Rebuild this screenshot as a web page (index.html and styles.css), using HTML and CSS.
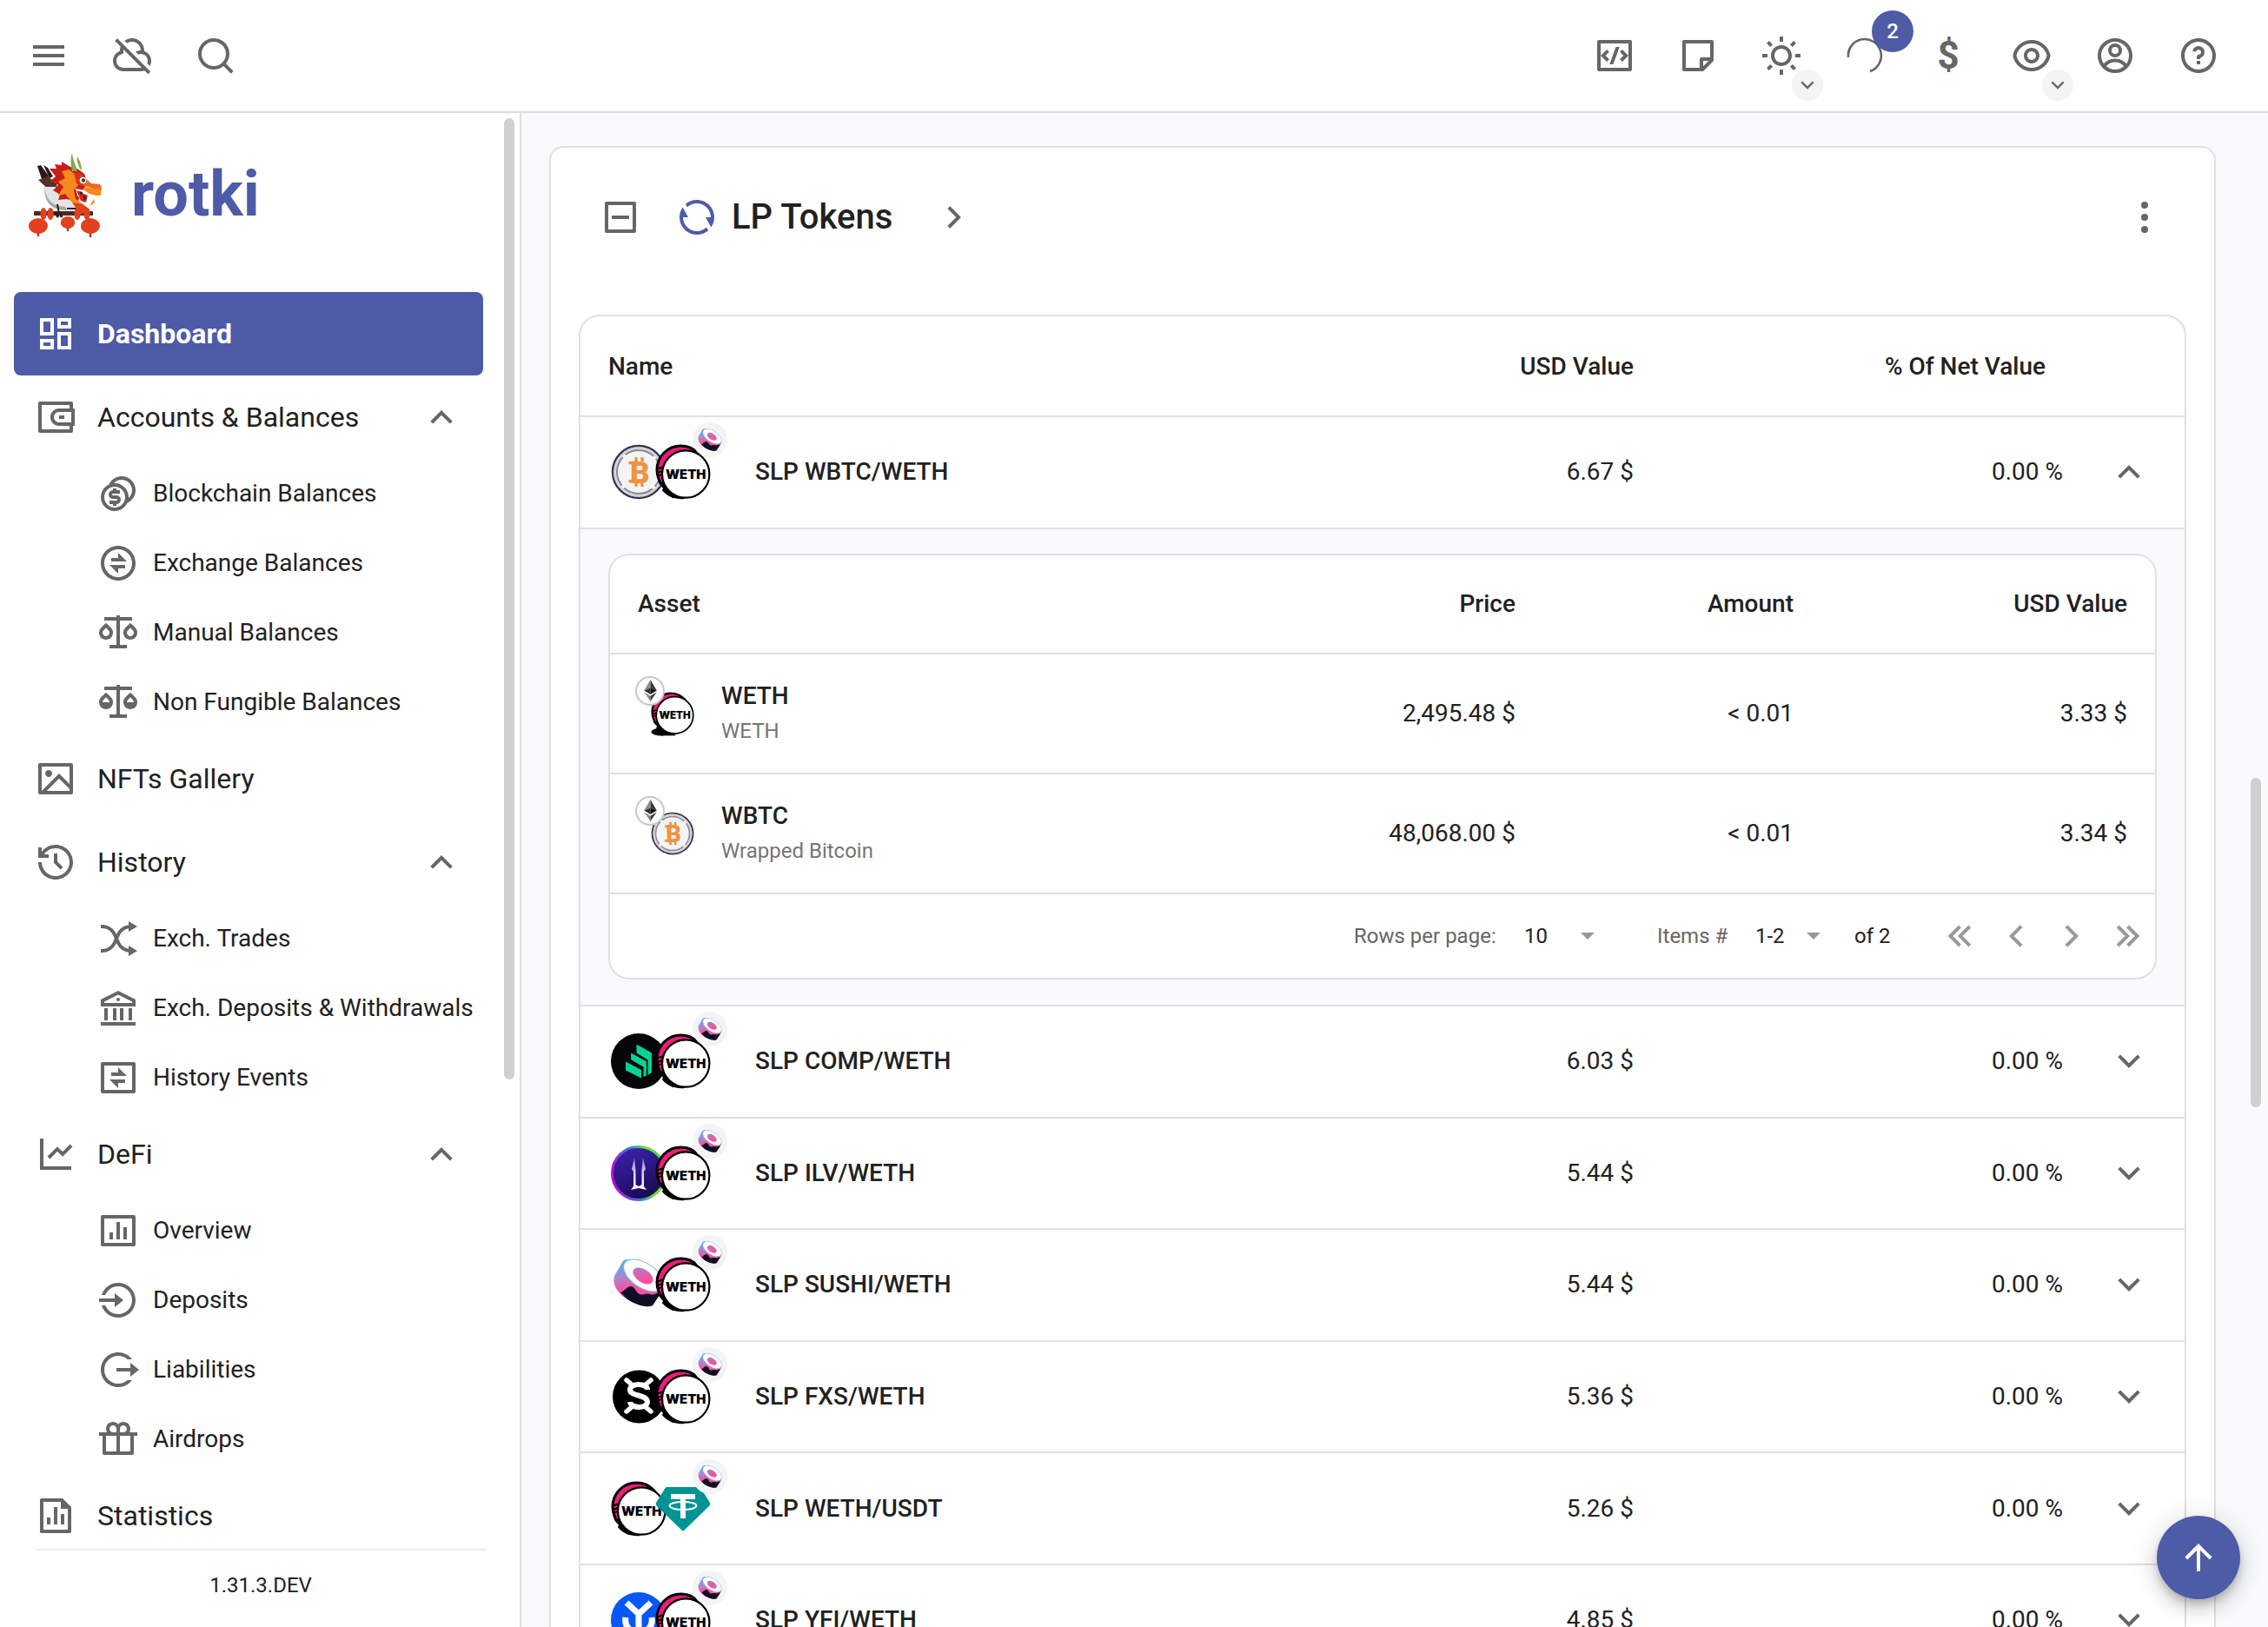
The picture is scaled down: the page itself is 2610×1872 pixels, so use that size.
FILE: index.html
```html
<!DOCTYPE html>
<html lang="en">
<head>
<meta charset="utf-8">
<title>rotki</title>
<link rel="stylesheet" href="styles.css">
</head>
<body>
<svg class="sprite" width="0" height="0" aria-hidden="true">
  <defs>
    <linearGradient id="sushi-side" x1="0.2" y1="0" x2="0.4" y2="1"><stop offset="0" stop-color="#41b0f0"/><stop offset="0.35" stop-color="#a68bd0"/><stop offset="0.6" stop-color="#f552a0"/><stop offset="1" stop-color="#fa52a0"/></linearGradient>
    <linearGradient id="sushi-core" x1="0" y1="0" x2="1" y2="0.6"><stop offset="0" stop-color="#a383cc"/><stop offset="0.8" stop-color="#f552a0"/></linearGradient>
    <linearGradient id="ilv-ring" x1="0" y1="0.6" x2="1" y2="0.4"><stop offset="0" stop-color="#c800d8"/><stop offset="0.45" stop-color="#2c7fe0"/><stop offset="0.7" stop-color="#7be02c"/><stop offset="1" stop-color="#3fd63f"/></linearGradient>
    <linearGradient id="ilv-core" x1="0.2" y1="0" x2="0.6" y2="1"><stop offset="0" stop-color="#3a22a8"/><stop offset="0.55" stop-color="#2b1480"/><stop offset="1" stop-color="#190a4a"/></linearGradient>
    <linearGradient id="ilv-blade" x1="0" y1="0" x2="0" y2="1"><stop offset="0" stop-color="#8a82c8"/><stop offset="0.6" stop-color="#e4e2f0"/><stop offset="1" stop-color="#ffffff"/></linearGradient>
  </defs>
  <symbol id="chev-up" viewBox="0 0 24 24"><path d="M12 10.83L7.05 15.78L5.64 14.36L12 8L18.36 14.36L16.95 15.78L12 10.83Z"/></symbol>
  <symbol id="chev-down" viewBox="0 0 24 24"><path d="M12 13.17L16.95 8.22L18.36 9.64L12 16L5.64 9.64L7.05 8.22L12 13.17Z"/></symbol>
  <symbol id="chev-left" viewBox="0 0 24 24"><path d="M10.83 12L15.78 16.95L14.36 18.36L8 12L14.36 5.64L15.78 7.05L10.83 12Z"/></symbol>
  <symbol id="chev-right" viewBox="0 0 24 24"><path d="M13.17 12L8.22 7.05L9.64 5.64L16 12L9.64 18.36L8.22 16.95L13.17 12Z"/></symbol>
  <symbol id="chev-first" viewBox="0 0 24 24"><path d="M4.84 12L11.04 18.21L12.46 16.79L7.66 12L12.46 7.21L11.04 5.79L4.84 12ZM10.49 12L16.69 18.21L18.11 16.79L13.31 12L18.11 7.21L16.69 5.79L10.49 12Z"/></symbol>
  <symbol id="chev-last" viewBox="0 0 24 24"><path d="M19.16 12L12.96 5.79L11.54 7.21L16.34 12L11.54 16.79L12.96 18.21L19.16 12ZM13.51 12L7.31 5.79L5.89 7.21L10.69 12L5.89 16.79L7.31 18.21L13.51 12Z"/></symbol>
  <symbol id="bars" viewBox="0 0 24 24"><path fill-rule="evenodd" d="M3 3H21C21.55 3 22 3.45 22 4V20C22 20.55 21.55 21 21 21H3C2.45 21 2 20.55 2 20V4C2 3.45 2.45 3 3 3ZM4 5V19H20V5H4ZM7 13H9V17H7V13ZM11 7H13V17H11V7ZM15 10H17V17H15V10Z"/></symbol>

  <symbol id="weth" viewBox="0 0 64 64">
    <circle cx="29.500" cy="29.500" r="27.500" fill="#ec1c78" stroke="#000" stroke-width="3"/>
    <path d="M2 36L8 34L9 46L18 58L33 62L20 62L8 53L9 51L4 45Z" fill="#000"/>
    <path d="M3 28.500L8 26.500M3 33L8 31" stroke="#000" stroke-width="2.200"/>
    <path d="M4.500 37L6.800 36L8.500 43L7 43.500Z" fill="#ec1c78"/>
    <path d="M8 53C14 61 24 64 34 63L20 52L11 52Z" fill="#000"/>
    <circle cx="35.200" cy="34.500" r="27.200" fill="#fff" stroke="#000" stroke-width="2.200"/>
  </symbol>
  <symbol id="wbtc" viewBox="0 0 64 64">
    <circle cx="32" cy="32" r="30" fill="#f4f4f4" stroke="#3a3450" stroke-width="2.400"/>
    <circle cx="32" cy="32" r="27.500" fill="none" stroke="#d3d2d8" stroke-width="2.400"/>
    <circle cx="32" cy="32" r="25" fill="none" stroke="#8a8694" stroke-width="2" stroke-dasharray="35.300 4" stroke-dashoffset="-22"/>
    <path d="M29 15V20M36 15V20M29 44V49M36 44V49" stroke="#f09242" stroke-width="3.400"/>
    <path d="M20.500 21.500H27M20.500 42.800H27" stroke="#f09242" stroke-width="3.400"/>
  </symbol>
  <symbol id="sushi" viewBox="0 0 64 64">
    <path d="M14 5L4 22C1 30 7 42 19 49C30 56 42 59 48 56L60 38C62 30 53 17 39 9C28 3 17 1 14 5Z" fill="url(#sushi-side)"/>
    <path d="M11 41C16 40 18 34 23 34C28 34 28 41 33 43C37 45 40 41 45 43C49 45 53 41 58 41L48 56C42 59 30 56 19 49Z" fill="#0e0f23"/>
    <ellipse cx="37.500" cy="21.500" rx="26" ry="14" transform="rotate(34 37.500 21.500)" fill="#fff" stroke="#7cb8ea" stroke-width="1"/>
    <ellipse cx="37" cy="22" rx="13" ry="7.500" transform="rotate(34 37 22)" fill="url(#sushi-core)"/>
  </symbol>
  <symbol id="comp" viewBox="0 0 64 64">
    <circle cx="32" cy="32" r="32" fill="#050607"/>
    <g fill="#00d395"><path d="M29.500 12.500L47 22.500V45L42.500 48V30.500L29.500 22.500Z"/><path d="M22.500 21.500L41.500 32V49L37 51V39L22.500 30.500Z" stroke="#050607" stroke-width="1.200"/><path d="M17 32.500L35 42V51.500L17 42.500Z"/></g>
  </symbol>
  <symbol id="ilv" viewBox="0 0 64 64">
    <circle cx="32" cy="32" r="30.500" fill="url(#ilv-core)" stroke="url(#ilv-ring)" stroke-width="3"/>
    <path d="M27 14L24 27L26 30V47L23 51L32 49L41 51L38 47V30L40 27L37 14L35.500 28V45L32 47L28.500 45V28Z" fill="url(#ilv-blade)"/>
  </symbol>
  <symbol id="fxs" viewBox="0 0 64 64">
    <circle cx="32.500" cy="32" r="30.500" fill="#000"/>
    <path d="M18 13L24 18M46 13L40 18M18 49L24 44M46 49L40 44" stroke="#fff" stroke-width="5.500" stroke-linecap="round"/>
    <path d="M42 24C42 16 22 16 22 24C22 32 42 29 42 38C42 46 23 46 22 38" fill="none" stroke="#fff" stroke-width="6"/>
  </symbol>
  <symbol id="usdt" viewBox="0 0 64 64">
    <path d="M13 7H50Q52 7 53 9L63 25Q64 27 62 29L33 57Q32 58 31 57L2 29Q0 27 1 25L11 9Q12 7 13 7Z" fill="#009393"/>
    <path d="M18 18H46M32 18V43" stroke="#fff" stroke-width="6"/>
    <ellipse cx="32" cy="28.500" rx="15.500" ry="4.500" fill="none" stroke="#fff" stroke-width="2"/>
  </symbol>
  <symbol id="yfi" viewBox="0 0 64 64">
    <circle cx="32" cy="32" r="32" fill="#0657f9"/>
    <path d="M18 12L32 25L46 12M32 25V44M17 29C13 52 51 52 47 29" fill="none" stroke="#fff" stroke-width="7"/>
  </symbol>
  <symbol id="eth" viewBox="0 0 24 36">
    <path d="M12 0L1.500 18L12 13.500Z" fill="#8c8c8c"/><path d="M12 0L22.500 18L12 13.500Z" fill="#393939"/>
    <path d="M12 13.500L1.500 18L12 24.500Z" fill="#343434"/><path d="M12 13.500L22.500 18L12 24.500Z" fill="#141414"/>
    <path d="M1.500 20.500L12 27V36Z" fill="#8c8c8c"/><path d="M22.500 20.500L12 27V36Z" fill="#3c3c3b"/>
  </symbol>
</svg>

<header class="topbar">
  <div class="topbar-group">
    <button class="tool"><svg class="icon" viewBox="0 0 24 24"><path d="M3 6H21V8H3V6ZM3 11H21V13H3V11ZM3 16H21V18H3V16Z"/></svg></button>
    <button class="tool"><svg class="icon" viewBox="0 0 24 24"><path d="M3.51472 2.10051L22.6066 21.1924L21.1924 22.6066L19.1782 20.5924C18.503 20.8556 17.7684 21 17 21H7C3.68629 21 1 18.3137 1 15C1 12.3846 2.67346 10.1599 5.00804 9.33857C5.0027 9.22639 5 9.11351 5 9C5 8.22228 5.12683 7.47418 5.36094 6.77527L2.10051 3.51472L3.51472 2.10051ZM7 9C7 9.08147 7.00193 9.16263 7.00578 9.24344L7.07662 10.7309L5.67183 11.2252C4.0844 11.7837 3 13.2889 3 15C3 17.2091 4.79086 19 7 19H17C17.1858 19 17.3687 18.9873 17.5478 18.9628L7.03043 8.44519C7.01032 8.62736 7 8.81247 7 9ZM12 2C15.866 2 19 5.13401 19 9C19 9.11351 18.9973 9.22639 18.992 9.33857C21.3265 10.1599 23 12.3846 23 15C23 16.0883 22.7103 17.1089 22.2037 17.9889L20.7111 16.4955C20.8974 16.0335 21 15.5287 21 15C21 12.79 19.21 11 17 11C16.4711 11 15.9661 11.1027 15.5039 11.2892L14.0111 9.7964C14.8912 9.28978 15.9118 9 17 9C17 6.23858 14.7614 4 12 4C10.9295 4 9.93766 4.33646 9.12428 4.90918L7.69418 3.48007C8.88169 2.55469 10.3763 2 12 2Z"/></svg></button>
    <button class="tool"><svg class="icon" viewBox="0 0 24 24"><path d="M18.031 16.6168L22.3137 20.8995L20.8995 22.3137L16.6168 18.031C15.0769 19.263 13.124 20 11 20C6.032 20 2 15.968 2 11C2 6.032 6.032 2 11 2C15.968 2 20 6.032 20 11C20 13.124 19.263 15.0769 18.031 16.6168ZM16.0247 15.8748C17.2475 14.6146 18 12.8956 18 11C18 7.1325 14.8675 4 11 4C7.1325 4 4 7.1325 4 11C4 14.8675 7.1325 18 11 18C12.8956 18 14.6146 17.2475 15.8748 16.0247L16.0247 15.8748Z"/></svg></button>
  </div>
  <div class="topbar-group">
    <button class="tool"><svg class="icon" viewBox="0 0 24 24"><path d="M3 3H21C21.55 3 22 3.45 22 4V20C22 20.55 21.55 21 21 21H3C2.45 21 2 20.55 2 20V4C2 3.45 2.45 3 3 3ZM4 5V19H20V5H4ZM20 12L16.4645 15.5355L15.0503 14.1213L17.1716 12L15.0503 9.87868L16.4645 8.46447L20 12ZM6.82843 12L8.94975 14.1213L7.53553 15.5355L4 12L7.53553 8.46447L8.94975 9.87868L6.82843 12ZM11.2443 17H9.11597L12.7557 7H14.884L11.2443 17Z" fill-rule="evenodd"/></svg></button>
    <button class="tool"><svg class="icon" viewBox="0 0 24 24"><path d="M21 15L15 20.996L4.00221 21C3.4487 21 3 20.5551 3 20.0066V3.9934C3 3.44476 3.44495 3 3.9934 3H20.0066C20.5552 3 21 3.45576 21 4.00247V15ZM19 5H5V19H13V14C13 13.4872 13.386 13.0645 13.8834 13.0067L14 13L19 12.999V5ZM18.171 14.999L15 15V18.169L18.171 14.999Z"/></svg></button>
    <button class="tool"><svg class="icon" viewBox="0 0 24 24"><path d="M12 18C8.68629 18 6 15.3137 6 12C6 8.68629 8.68629 6 12 6C15.3137 6 18 8.68629 18 12C18 15.3137 15.3137 18 12 18ZM12 16C14.2091 16 16 14.2091 16 12C16 9.79086 14.2091 8 12 8C9.79086 8 8 9.79086 8 12C8 14.2091 9.79086 16 12 16ZM11 1H13V4H11V1ZM11 20H13V23H11V20ZM3.51472 4.92893L4.92893 3.51472L7.05025 5.63604L5.63604 7.05025L3.51472 4.92893ZM16.9497 18.364L18.364 16.9497L20.4853 19.0711L19.0711 20.4853L16.9497 18.364ZM19.0711 3.51472L20.4853 4.92893L18.364 7.05025L16.9497 5.63604L19.0711 3.51472ZM5.63604 16.9497L7.05025 18.364L4.92893 20.4853L3.51472 19.0711L5.63604 16.9497ZM23 11V13H20V11H23ZM4 11V13H1V11H4Z"/></svg><span class="tool-more"><svg viewBox="0 0 24 24"><use href="#chev-down"/></svg></span></button>
    <button class="tool"><svg class="icon" viewBox="0 0 48 48"><path class="spinner" d="M5 26A19 19 0 1 1 30 42"/></svg><span class="badge">2</span></button>
    <button class="tool currency">$</button>
    <button class="tool"><svg class="icon" viewBox="0 0 24 24"><path d="M12.0003 3C17.3924 3 21.8784 6.87976 22.8189 12C21.8784 17.1202 17.3924 21 12.0003 21C6.60812 21 2.12215 17.1202 1.18164 12C2.12215 6.87976 6.60812 3 12.0003 3ZM12.0003 19C16.2359 19 19.8603 16.052 20.7777 12C19.8603 7.94803 16.2359 5 12.0003 5C7.7646 5 4.14022 7.94803 3.22278 12C4.14022 16.052 7.7646 19 12.0003 19ZM12.0003 16.5C9.51498 16.5 7.50026 14.4853 7.50026 12C7.50026 9.51472 9.51498 7.5 12.0003 7.5C14.4855 7.5 16.5003 9.51472 16.5003 12C16.5003 14.4853 14.4855 16.5 12.0003 16.5ZM12.0003 14.5C13.381 14.5 14.5003 13.3807 14.5003 12C14.5003 10.6193 13.381 9.5 12.0003 9.5C10.6196 9.5 9.50026 10.6193 9.50026 12C9.50026 13.3807 10.6196 14.5 12.0003 14.5Z"/></svg><span class="tool-more"><svg viewBox="0 0 24 24"><use href="#chev-down"/></svg></span></button>
    <button class="tool"><svg class="icon stroked" viewBox="0 0 24 24"><circle cx="12" cy="12" r="9"/><circle cx="12" cy="9" r="3"/><path d="M5.700 18C7.200 15.900 9.500 14.700 12 14.700C14.500 14.700 16.800 15.900 18.300 18"/></svg></button>
    <button class="tool"><svg class="icon" viewBox="0 0 24 24"><path d="M12 22C6.47715 22 2 17.5228 2 12C2 6.47715 6.47715 2 12 2C17.5228 2 22 6.47715 22 12C22 17.5228 17.5228 22 12 22ZM12 20C16.4183 20 20 16.4183 20 12C20 7.58172 16.4183 4 12 4C7.58172 4 4 7.58172 4 12C4 16.4183 7.58172 20 12 20ZM11 15H13V17H11V15ZM13 13.3551V14H11V12.5C11 11.9477 11.4477 11.5 12 11.5C12.8284 11.5 13.5 10.8284 13.5 10C13.5 9.17157 12.8284 8.5 12 8.5C11.2723 8.5 10.6656 9.01823 10.5288 9.70577L8.56731 9.31346C8.88637 7.70919 10.302 6.5 12 6.5C13.933 6.5 15.5 8.067 15.5 10C15.5 11.5855 14.4457 12.9248 13 13.3551Z"/></svg></button>
  </div>
</header>

<div class="shell">
  <aside class="sidebar">
    <div class="brand">
      <svg class="brand-logo" viewBox="0 0 86 98">
        <path d="M10 16L14 15L22 26L27 38L16 34Z M17 15L22 18L28 28L24 30Z" fill="#2c181c"/>
        <path d="M11 32L22 28L32 36L34 48L24 44Z" fill="#51332c"/>
        <path d="M18 40C18 58 26 66 44 66L62 62L58 40Z" fill="#e4e4e6"/>
        <path d="M18 40C20 56 28 62 42 63L44 67C26 67 18 58 18 40Z" fill="#a5a5a8"/>
        <path d="M24 19L32 19L30 14L38 15L38 11L48 17L56 19L64 25L68 36L62 44L56 58L44 54L34 55L36 49L28 44L34 38L25 33L31 28Z" fill="#c81e18"/>
        <path d="M38 22L46 20L54 26L57 38L52 44L54 54L68 64L76 58L74 52L60 46L66 40L74 42L84 38L83 50L78 50L70 48L72 60L66 66L50 58L42 48L34 50L40 40L34 34L42 30Z" fill="#f68a1c"/>
        <path d="M52 24L60 24L67 32L62 40L55 36Z" fill="#d8321c"/>
        <path d="M50 22C48 14 48 6 50 1C51 10 54 14 56 22ZM59 19C56 13 55 9 56 5C59 10 61 15 61 21Z" fill="#86a84a"/>
        <path d="M54 42L64 44L76 52L70 62L64 60L56 50Z" fill="#fff"/><path d="M55 44L68 50L66 58L60 56Z" fill="#c92716"/>
        <path d="M58 45L62 46L61 50ZM63 50L66 52L64 56Z" fill="#2c181c"/>
        <path d="M65 30L72 36L82 37L84 43L74 42L62 38Z" fill="#ea6a1e"/>
        <circle cx="62.500" cy="32.500" r="3.800" fill="#fff"/><circle cx="63" cy="32.500" r="2.200" fill="#155044"/>
        <path d="M33 60L35 71M44 65H57" stroke="#2c181c" stroke-width="2" fill="none"/>
        <rect x="6" y="68" width="68" height="5" rx="1" fill="#4a2a20"/>
        <g fill="#e2401f"><ellipse cx="17" cy="71" rx="3.600" ry="7"/><ellipse cx="25" cy="71" rx="3.600" ry="7"/><ellipse cx="56" cy="71" rx="3.600" ry="7"/><ellipse cx="67" cy="71" rx="3.600" ry="7"/><path d="M50 58L62 60L70 66L60 72Z"/><ellipse cx="11" cy="85" rx="11" ry="9"/><ellipse cx="45" cy="81" rx="8.200" ry="7"/><ellipse cx="71" cy="85" rx="11" ry="9"/></g>
        <path d="M11 93V97M45 87V91M71 93V98" stroke="#b03a26" stroke-width="2.500"/>
        <path d="M31 69L34 75M36 69L38 75" stroke="#2c181c" stroke-width="3"/>
      </svg>
      <span class="brand-name">rotki</span>
    </div>
    <nav class="menu">
      <a class="item active"><svg class="icon" viewBox="0 0 24 24"><path d="M13 21V11H21V21H13ZM3 13V3H11V13H3ZM9 11V5H5V11H9ZM3 21V15H11V21H3ZM5 19H9V17H5V19ZM15 19H19V13H15V19ZM13 3H21V9H13V3ZM15 5V7H19V5H15Z"/></svg><span>Dashboard</span></a>
      <a class="item"><svg class="icon" viewBox="0 0 24 24"><path fill-rule="evenodd" d="M22 7H23V17H22V20C22 20.55 21.55 21 21 21H3C2.45 21 2 20.55 2 20V4C2 3.45 2.45 3 3 3H21C21.55 3 22 3.45 22 4V7ZM20 17H14C11.24 17 9 14.76 9 12C9 9.24 11.24 7 14 7H20V5H4V19H20V17ZM21 15V9H14C12.34 9 11 10.34 11 12C11 13.66 12.34 15 14 15H21ZM14 11H17V13H14V11Z"/></svg><span>Accounts &amp; Balances</span><svg class="icon toggle"><use href="#chev-up"/></svg></a>
      <a class="subitem"><svg class="icon" viewBox="0 0 24 24"><path d="M14.0049 2.00281C18.4232 2.00281 22.0049 5.58453 22.0049 10.0028C22.0049 13.2474 20.0733 16.0408 17.2973 17.296C16.0422 20.0712 13.249 22.0028 10.0049 22.0028C5.5866 22.0028 2.00488 18.4211 2.00488 14.0028C2.00488 10.7586 3.93646 7.96544 6.71157 6.71045C7.96689 3.93445 10.7603 2.00281 14.0049 2.00281ZM10.0049 8.00281C6.69117 8.00281 4.00488 10.6891 4.00488 14.0028C4.00488 17.3165 6.69117 20.0028 10.0049 20.0028C13.3186 20.0028 16.0049 17.3165 16.0049 14.0028C16.0049 10.6891 13.3186 8.00281 10.0049 8.00281ZM11.0049 9.00281V10.0028H13.0049V12.0028H9.00488C8.72874 12.0028 8.50488 12.2267 8.50488 12.5028C8.50488 12.7482 8.68176 12.9524 8.91501 12.9948L9.00488 13.0028H11.0049C12.3856 13.0028 13.5049 14.1221 13.5049 15.5028C13.5049 16.8835 12.3856 18.0028 11.0049 18.0028V19.0028H9.00488V18.0028H7.00488V16.0028H11.0049C11.281 16.0028 11.5049 15.7789 11.5049 15.5028C11.5049 15.2574 11.328 15.0532 11.0948 15.0109L11.0049 15.0028H9.00488C7.62417 15.0028 6.50488 13.8835 6.50488 12.5028C6.50488 11.1221 7.62417 10.0028 9.00488 10.0028V9.00281H11.0049ZM14.0049 4.00281C12.2214 4.00281 10.6196 4.78097 9.52064 6.0163C9.68133 6.00733 9.84254 6.00281 10.0049 6.00281C14.4232 6.00281 18.0049 9.58453 18.0049 14.0028C18.0049 14.1655 18 14.327 17.9905 14.4873C19.2265 13.3885 20.0049 11.7865 20.0049 10.0028C20.0049 6.6891 17.3186 4.00281 14.0049 4.00281Z"/></svg><span>Blockchain Balances</span></a>
      <a class="subitem"><svg class="icon" viewBox="0 0 24 24"><path d="M12 22C6.47715 22 2 17.5228 2 12C2 6.47715 6.47715 2 12 2C17.5228 2 22 6.47715 22 12C22 17.5228 17.5228 22 12 22ZM12 20C16.4183 20 20 16.4183 20 12C20 7.58172 16.4183 4 12 4C7.58172 4 4 7.58172 4 12C4 16.4183 7.58172 20 12 20ZM12 9V6L17 11H8V9H12ZM12 15V18L7 13H16V15H12Z"/></svg><span>Exchange Balances</span></a>
      <a class="subitem"><svg class="icon" viewBox="0 0 24 24"><path d="M13 2V3H20V5H13V19H17V21H7V19H11V5H4V3H11V2H13ZM5 6.34L7.83 9.17C8.55 9.9 9 10.9 9 12C9 14.21 7.21 16 5 16C2.79 16 1 14.21 1 12C1 10.9 1.450 9.9 2.170 9.17L5 6.34ZM19 6.34L21.83 9.17C22.55 9.9 23 10.9 23 12C23 14.21 21.21 16 19 16C16.79 16 15 14.21 15 12C15 10.9 15.450 9.9 16.170 9.17L19 6.34ZM5 9.17L3.580 10.590C3.210 10.960 3 11.460 3 12C3 13.1 3.9 14 5 14C6.1 14 7 13.1 7 12C7 11.460 6.790 10.960 6.410 10.590L5 9.17ZM19 9.17L17.580 10.590C17.210 10.960 17 11.460 17 12C17 13.1 17.9 14 19 14C20.1 14 21 13.1 21 12C21 11.460 20.790 10.960 20.410 10.590L19 9.17Z"/></svg><span>Manual Balances</span></a>
      <a class="subitem"><svg class="icon" viewBox="0 0 24 24"><path d="M13 2V3H20V5H13V19H17V21H7V19H11V5H4V3H11V2H13ZM5 6.34L7.83 9.17C8.55 9.9 9 10.9 9 12C9 14.21 7.21 16 5 16C2.79 16 1 14.21 1 12C1 10.9 1.450 9.9 2.170 9.17L5 6.34ZM19 6.34L21.83 9.17C22.55 9.9 23 10.9 23 12C23 14.21 21.21 16 19 16C16.79 16 15 14.21 15 12C15 10.9 15.450 9.9 16.170 9.17L19 6.34ZM5 9.17L3.580 10.590C3.210 10.960 3 11.460 3 12H7C7 11.460 6.790 10.960 6.410 10.590L5 9.17ZM19 9.17L17.580 10.590C17.210 10.960 17 11.460 17 12H21C21 11.460 20.790 10.960 20.410 10.590L19 9.17Z"/></svg><span>Non Fungible Balances</span></a>
      <a class="item"><svg class="icon" viewBox="0 0 24 24"><path d="M2.9918 21C2.44405 21 2 20.5551 2 20.0066V3.9934C2 3.44476 2.45531 3 2.9918 3H21.0082C21.556 3 22 3.44495 22 3.9934V20.0066C22 20.5552 21.5447 21 21.0082 21H2.9918ZM20 15V5H4V19L14 9L20 15ZM20 17.8284L14 11.8284L6.82843 19H20V17.8284ZM8 11C6.89543 11 6 10.1046 6 9C6 7.89543 6.89543 7 8 7C9.10457 7 10 7.89543 10 9C10 10.1046 9.10457 11 8 11Z"/></svg><span>NFTs Gallery</span></a>
      <a class="item"><svg class="icon" viewBox="0 0 24 24"><path d="M12 2C17.5228 2 22 6.47715 22 12C22 17.5228 17.5228 22 12 22C6.47715 22 2 17.5228 2 12H4C4 16.4183 7.58172 20 12 20C16.4183 20 20 16.4183 20 12C20 7.58172 16.4183 4 12 4C9.25022 4 6.82447 5.38734 5.38451 7.50024L8 7.5V9.5H2V3.5H4L3.99989 5.99918C5.82434 3.57075 8.72873 2 12 2ZM13 7L12.9998 11.585L16.2426 14.8284L14.8284 16.2426L10.9998 12.413L11 7H13Z"/></svg><span>History</span><svg class="icon toggle"><use href="#chev-up"/></svg></a>
      <a class="subitem"><svg class="icon" viewBox="0 0 24 24"><path d="M18 17.8832V16L23 19L18 22V19.9095C14.9224 19.4698 12.2513 17.4584 11.0029 14.5453L11 14.5386L10.9971 14.5453C9.57893 17.8544 6.32508 20 2.72483 20H2V18H2.72483C5.52503 18 8.05579 16.3312 9.15885 13.7574L9.91203 12L9.15885 10.2426C8.05579 7.66878 5.52503 6 2.72483 6H2V4H2.72483C6.32508 4 9.57893 6.14557 10.9971 9.45473L11 9.46141L11.0029 9.45473C12.2513 6.5416 14.9224 4.53022 18 4.09051V2L23 5L18 8V6.11684C15.7266 6.53763 13.7737 8.0667 12.8412 10.2426L12.088 12L12.8412 13.7574C13.7737 15.9333 15.7266 17.4624 18 17.8832Z"/></svg><span>Exch. Trades</span></a>
      <a class="subitem"><svg class="icon" viewBox="0 0 24 24"><path d="M2 20H22V22H2V20ZM4 12H6V19H4V12ZM9 12H11V19H9V12ZM13 12H15V19H13V12ZM18 12H20V19H18V12ZM2 7L12 2L22 7V11H2V7ZM4 8.23607V9H20V8.23607L12 4.23607L4 8.23607ZM12 8C11.4477 8 11 7.55228 11 7C11 6.44772 11.4477 6 12 6C12.5523 6 13 6.44772 13 7C13 7.55228 12.5523 8 12 8Z"/></svg><span>Exch. Deposits &amp; Withdrawals</span></a>
      <a class="subitem"><svg class="icon" viewBox="0 0 24 24"><path fill-rule="evenodd" d="M3 3H21C21.55 3 22 3.45 22 4V20C22 20.55 21.55 21 21 21H3C2.45 21 2 20.55 2 20V4C2 3.45 2.45 3 3 3ZM4 5V19H20V5H4ZM12 9V6L17 11H8V9H12ZM12 15V18L7 13H16V15H12Z"/></svg><span>History Events</span></a>
      <a class="item"><svg class="icon" viewBox="0 0 24 24"><path d="M5 3V19H21V21H3V3H5ZM20.2929 6.29289L21.7071 7.70711L16 13.4142L13 10.415L8.70711 14.7071L7.29289 13.2929L13 7.58579L16 10.585L20.2929 6.29289Z"/></svg><span>DeFi</span><svg class="icon toggle"><use href="#chev-up"/></svg></a>
      <a class="subitem"><svg class="icon"><use href="#bars"/></svg><span>Overview</span></a>
      <a class="subitem"><svg class="icon" viewBox="0 0 24 24"><path d="M10 11V8L15 12L10 16V13H1V11H10ZM2.4578 15H4.58152C5.76829 17.9318 8.64262 20 12 20C16.4183 20 20 16.4183 20 12C20 7.58172 16.4183 4 12 4C8.64262 4 5.76829 6.06817 4.58152 9H2.4578C3.73207 4.94289 7.52236 2 12 2C17.5228 2 22 6.47715 22 12C22 17.5228 17.5228 22 12 22C7.52236 22 3.73207 19.0571 2.4578 15Z"/></svg><span>Deposits</span></a>
      <a class="subitem"><svg class="icon" viewBox="0 0 24 24"><path d="M12 22C6.47715 22 2 17.5228 2 12C2 6.47715 6.47715 2 12 2C15.2713 2 18.1757 3.57078 20.0002 5.99923L17.2909 5.99931C15.8807 4.75499 14.0285 4 12 4C7.58172 4 4 7.58172 4 12C4 16.4183 7.58172 20 12 20C14.029 20 15.8816 19.2446 17.2919 17.9998L20.0009 17.9998C18.1765 20.4288 15.2717 22 12 22ZM19 16V13H11V11H19V8L24 12L19 16Z"/></svg><span>Liabilities</span></a>
      <a class="subitem"><svg class="icon" viewBox="0 0 24 24"><path d="M15.0049 2.00281C17.214 2.00281 19.0049 3.79367 19.0049 6.00281C19.0049 6.73184 18.8098 7.41532 18.4691 8.00392L23.0049 8.00281V10.0028H21.0049V20.0028C21.0049 20.5551 20.5572 21.0028 20.0049 21.0028H4.00488C3.4526 21.0028 3.00488 20.5551 3.00488 20.0028V10.0028H1.00488V8.00281L5.54065 8.00392C5.19992 7.41532 5.00488 6.73184 5.00488 6.00281C5.00488 3.79367 6.79574 2.00281 9.00488 2.00281C10.2001 2.00281 11.2729 2.52702 12.0058 3.35807C12.7369 2.52702 13.8097 2.00281 15.0049 2.00281ZM11.0049 10.0028H5.00488V19.0028H11.0049V10.0028ZM19.0049 10.0028H13.0049V19.0028H19.0049V10.0028ZM9.00488 4.00281C7.90031 4.00281 7.00488 4.89824 7.00488 6.00281C7.00488 7.05717 7.82076 7.92097 8.85562 7.99732L9.00488 8.00281H11.0049V6.00281C11.0049 5.00116 10.2686 4.1715 9.30766 4.02558L9.15415 4.00829L9.00488 4.00281ZM15.0049 4.00281C13.9505 4.00281 13.0867 4.81869 13.0104 5.85355L13.0049 6.00281V8.00281H15.0049C16.0592 8.00281 16.923 7.18693 16.9994 6.15207L17.0049 6.00281C17.0049 4.89824 16.1095 4.00281 15.0049 4.00281Z"/></svg><span>Airdrops</span></a>
      <a class="item"><svg class="icon" viewBox="0 0 24 24"><path fill-rule="evenodd" d="M11 7H13V17H11V7ZM15 11H17V17H15V11ZM7 13H9V17H7V13ZM15 4H5V20H19V8H15V4ZM3 2.9918C3 2.44405 3.44749 2 3.9985 2H16L20.9997 7L21 20.9925C21 21.5489 20.5551 22 20.0066 22H3.9934C3.44476 22 3 21.5447 3 21.0082V2.9918Z"/></svg><span>Statistics</span></a>
    </nav>
    <div class="version">1.31.3.DEV</div>
    <div class="scroll-thumb side-thumb"></div>
  </aside>

  <main class="content">
    <section class="card">
      <div class="card-head">
        <svg class="icon" viewBox="0 0 24 24"><path fill-rule="evenodd" d="M4 3H20C20.55 3 21 3.45 21 4V20C21 20.55 20.55 21 20 21H4C3.45 21 3 20.55 3 20V4C3 3.45 3.45 3 4 3ZM5 5V19H19V5H5ZM7 11H17V13H7V11Z"/></svg>
        <svg class="icon refresh" viewBox="0 0 24 24"><path d="M5.46257 4.43262C7.21556 2.91688 9.5007 2 12 2C17.5228 2 22 6.47715 22 12C22 14.1361 21.3302 16.1158 20.1892 17.7406L17 12H20C20 7.58172 16.4183 4 12 4C9.84982 4 7.89777 4.84827 6.46023 6.22842L5.46257 4.43262ZM18.5374 19.5674C16.7844 21.0831 14.4993 22 12 22C6.47715 22 2 17.5228 2 12C2 9.86386 2.66979 7.88416 3.8108 6.25944L7 12H4C4 16.4183 7.58172 20 12 20C14.1502 20 16.1022 19.1517 17.5398 17.7716L18.5374 19.5674Z"/></svg>
        <h2>LP Tokens</h2>
        <svg class="icon"><use href="#chev-right"/></svg>
        <svg class="icon more" viewBox="0 0 24 24"><circle cx="12" cy="5" r="2"/><circle cx="12" cy="12" r="2"/><circle cx="12" cy="19" r="2"/></svg>
      </div>

      <div class="table">
        <div class="row head"><span class="name">Name</span><span class="usd">USD Value</span><span class="pct">% Of Net Value</span><span class="expand"></span></div>
        <div class="row"><span class="pair"><svg viewBox="0 0 64 64"><use href="#wbtc"/><text class="btc-label" x="22" y="44.500">B</text></svg><svg viewBox="0 0 64 64"><use href="#weth"/><text class="weth-label" x="12" y="39.500" textLength="46.500" lengthAdjust="spacingAndGlyphs">WETH</text></svg><i class="proto"><svg><use href="#sushi"/></svg></i></span><span class="name">SLP WBTC/WETH</span><span class="usd">6.67 $</span><span class="pct">0.00 %</span><span class="expand"><svg class="icon"><use href="#chev-up"/></svg></span></div>
        <div class="details">
          <div class="subtable">
            <div class="subrow head"><span class="asset">Asset</span><span class="price">Price</span><span class="amount">Amount</span><span class="value">USD Value</span></div>
            <div class="subrow"><span class="asset"><span class="coin"><svg class="coin-main" viewBox="0 0 64 65.280"><ellipse cx="15" cy="59" rx="14.500" ry="5.500"/><path d="M15 64.500H36V56H15Z"/><use href="#weth" width="64" height="64"/><text class="weth-label" x="12" y="39.500" textLength="46.500" lengthAdjust="spacingAndGlyphs">WETH</text></svg><i class="chain"><svg><use href="#eth"/></svg></i></span><span class="labels"><b>WETH</b><small>WETH</small></span></span><span class="price">2,495.48 $</span><span class="amount">&lt; 0.01</span><span class="value">3.33 $</span></div>
            <div class="subrow"><span class="asset"><span class="coin"><svg class="coin-main" viewBox="0 0 64 65.280"><use href="#wbtc" width="64" height="64"/><text class="btc-label" x="22" y="44.500">B</text></svg><i class="chain"><svg><use href="#eth"/></svg></i></span><span class="labels"><b>WBTC</b><small>Wrapped Bitcoin</small></span></span><span class="price">48,068.00 $</span><span class="amount">&lt; 0.01</span><span class="value">3.34 $</span></div>
            <div class="pager">
              <span class="muted per-page">Rows per page:</span><span class="count">10</span><i class="caret"></i>
              <span class="muted items">Items #</span><span class="range">1-2</span><i class="caret"></i>
              <span class="total">of 2</span>
              <span class="pages"><svg class="icon"><use href="#chev-first"/></svg><svg class="icon"><use href="#chev-left"/></svg><svg class="icon"><use href="#chev-right"/></svg><svg class="icon"><use href="#chev-last"/></svg></span>
            </div>
          </div>
        </div>
        <div class="row"><span class="pair"><svg><use href="#comp"/></svg><svg viewBox="0 0 64 64"><use href="#weth"/><text class="weth-label" x="12" y="39.500" textLength="46.500" lengthAdjust="spacingAndGlyphs">WETH</text></svg><i class="proto"><svg><use href="#sushi"/></svg></i></span><span class="name">SLP COMP/WETH</span><span class="usd">6.03 $</span><span class="pct">0.00 %</span><span class="expand"><svg class="icon"><use href="#chev-down"/></svg></span></div>
        <div class="row"><span class="pair"><svg><use href="#ilv"/></svg><svg viewBox="0 0 64 64"><use href="#weth"/><text class="weth-label" x="12" y="39.500" textLength="46.500" lengthAdjust="spacingAndGlyphs">WETH</text></svg><i class="proto"><svg><use href="#sushi"/></svg></i></span><span class="name">SLP ILV/WETH</span><span class="usd">5.44 $</span><span class="pct">0.00 %</span><span class="expand"><svg class="icon"><use href="#chev-down"/></svg></span></div>
        <div class="row"><span class="pair"><svg><use href="#sushi"/></svg><svg viewBox="0 0 64 64"><use href="#weth"/><text class="weth-label" x="12" y="39.500" textLength="46.500" lengthAdjust="spacingAndGlyphs">WETH</text></svg><i class="proto"><svg><use href="#sushi"/></svg></i></span><span class="name">SLP SUSHI/WETH</span><span class="usd">5.44 $</span><span class="pct">0.00 %</span><span class="expand"><svg class="icon"><use href="#chev-down"/></svg></span></div>
        <div class="row"><span class="pair"><svg><use href="#fxs"/></svg><svg viewBox="0 0 64 64"><use href="#weth"/><text class="weth-label" x="12" y="39.500" textLength="46.500" lengthAdjust="spacingAndGlyphs">WETH</text></svg><i class="proto"><svg><use href="#sushi"/></svg></i></span><span class="name">SLP FXS/WETH</span><span class="usd">5.36 $</span><span class="pct">0.00 %</span><span class="expand"><svg class="icon"><use href="#chev-down"/></svg></span></div>
        <div class="row"><span class="pair"><svg viewBox="0 0 64 64"><use href="#weth"/><text class="weth-label" x="12" y="39.500" textLength="46.500" lengthAdjust="spacingAndGlyphs">WETH</text></svg><svg><use href="#usdt"/></svg><i class="proto"><svg><use href="#sushi"/></svg></i></span><span class="name">SLP WETH/USDT</span><span class="usd">5.26 $</span><span class="pct">0.00 %</span><span class="expand"><svg class="icon"><use href="#chev-down"/></svg></span></div>
        <div class="row"><span class="pair"><svg><use href="#yfi"/></svg><svg viewBox="0 0 64 64"><use href="#weth"/><text class="weth-label" x="12" y="39.500" textLength="46.500" lengthAdjust="spacingAndGlyphs">WETH</text></svg><i class="proto"><svg><use href="#sushi"/></svg></i></span><span class="name">SLP YFI/WETH</span><span class="usd">4.85 $</span><span class="pct">0.00 %</span><span class="expand"><svg class="icon"><use href="#chev-down"/></svg></span></div>
      </div>
    </section>
    <div class="scroll-thumb page-thumb"></div>
    <button class="to-top"><svg class="icon" viewBox="0 0 24 24"><path d="M13 7.82843V20H11V7.82843L5.63604 13.1924L4.22183 11.7782L12 4L19.7782 11.7782L18.364 13.1924L13 7.82843Z"/></svg></button>
  </main>
</div>
</body>
</html>
```

FILE: styles.css
```css
* { box-sizing: border-box; }

body {
  margin: 0;
  height: 1872px;
  overflow: hidden;
  display: flex;
  flex-direction: column;
  font-family: Roboto, "Liberation Sans", sans-serif;
  font-size: 28px;
  line-height: 40px;
  color: #212121;
  background: #f9fafc;
}

button {
  border: 0;
  padding: 0;
  background: none;
  font: inherit;
  color: inherit;
}

.sprite { position: absolute; }

.icon {
  flex: none;
  display: block;
  width: 48px;
  height: 48px;
  fill: #666;
}

.stroked { fill: none; stroke: #666; stroke-width: 2; }

/* top bar */
.topbar {
  flex: none;
  display: flex;
  justify-content: space-between;
  height: 130px;
  padding: 16px 32px 16px 8px;
  background: #fff;
  border-bottom: 2px solid #dcdcdf;
}

.topbar-group { display: flex; }

.tool {
  position: relative;
  display: flex;
  align-items: center;
  justify-content: center;
  width: 96px;
  height: 96px;
}

.tool-more {
  position: absolute;
  left: 60px;
  top: 64px;
  width: 36px;
  height: 36px;
  padding: 4px;
  border-radius: 50%;
  background: #f4f4f4;
}

.tool-more svg { display: block; width: 28px; height: 28px; fill: #666; }

.spinner { fill: none; stroke: #666; stroke-width: 2.6; }

.badge {
  position: absolute;
  left: 56px;
  top: -4px;
  width: 48px;
  height: 48px;
  border-radius: 50%;
  background: #4e5ba6;
  color: #fff;
  font-size: 24px;
  font-weight: 500;
  line-height: 48px;
  text-align: center;
}

.tool.currency { font-size: 44px; font-weight: 700; color: #666; }

/* sidebar */
.shell { flex: 1; min-height: 0; display: flex; }

.sidebar {
  position: relative;
  flex: none;
  display: flex;
  flex-direction: column;
  width: 600px;
  background: #fff;
  border-right: 2px solid #dedee0;
}

.brand {
  flex: none;
  display: flex;
  align-items: center;
  height: 206px;
  padding: 0 33px 18px;
}

.brand-logo { width: 86px; height: 98px; }

.brand-name {
  margin-left: 32px;
  font-size: 72px;
  font-weight: 700;
  line-height: 96px;
  color: #4e5ba6;
}

.menu {
  flex: 1;
  min-height: 0;
  overflow: hidden;
  padding: 0 42px 0 16px;
}

.item {
  display: flex;
  align-items: center;
  gap: 24px;
  height: 96px;
  padding: 0 24px;
  border-radius: 8px;
  font-size: 32px;
}

.item .toggle { margin-left: auto; }

.item.active { background: #4e5ba6; color: #fff; font-weight: 700; }
.item.active .icon { fill: #fff; }

.subitem {
  display: flex;
  align-items: center;
  gap: 16px;
  height: 80px;
  padding-left: 96px;
  white-space: nowrap;
}

.version {
  flex: none;
  height: 90px;
  margin: 0 38px 0 40px;
  padding: 20px 0;
  border-top: 2px solid #eee;
  font-size: 24px;
  text-align: center;
}

.scroll-thumb {
  position: absolute;
  width: 12px;
  border-radius: 6px;
  background: #d0d0d0;
}

.side-thumb { left: 580px; top: 6px; height: 1106px; }
.page-thumb { right: 8px; top: 765px; height: 379px; }

/* content */
.content {
  position: relative;
  flex: 1;
  min-width: 0;
  overflow: hidden;
  padding: 38px 60px 0 32px;
}

.card {
  border: 2px solid #e0e0e0;
  border-radius: 16px;
  padding: 0 32px;
  background: #fff;
}

.card-head {
  display: flex;
  align-items: center;
  height: 160px;
  margin-bottom: 32px;
  padding: 0 24px;
}

.refresh { margin-left: 40px; fill: #4e5ba6; }

.card-head h2 {
  width: 232px;
  margin: 0 0 0 16px;
  font-size: 40px;
  font-weight: 500;
  line-height: 48px;
}

.more { margin-left: auto; }

.table {
  border: 2px solid #e0e0e0;
  border-radius: 24px;
  overflow: hidden;
}

.row {
  display: flex;
  align-items: center;
  height: 128.6px;
  padding-left: 32px;
  border-bottom: 2px solid #e0e0e0;
}

.head { font-weight: 500; }
.row.head { height: 116px; padding-top: 2px; }

.name { flex: 1; font-weight: 500; }
.usd { width: 300px; text-align: right; }
.pct { width: 496px; padding-right: 2px; text-align: right; }
.row.head .pct { padding-right: 22px; }

.expand {
  display: flex;
  justify-content: flex-end;
  width: 138px;
  padding-right: 40px;
}

.pair {
  position: relative;
  display: flex;
  width: 169px;
  padding-left: 3px;
}

.pair > svg { display: block; width: 64px; height: 64px; }
.pair > svg + svg { margin-left: -13px; }

.weth-label {
  font-family: Inter, sans-serif;
  font-size: 14.5px;
  font-weight: 900;
  fill: #000;
}

.btc-label {
  font-size: 35px;
  font-weight: 900;
  fill: #f09242;
}

.proto {
  position: absolute;
  left: 97px;
  top: -25px;
  width: 40px;
  height: 40px;
  padding: 6px 5px;
  border-radius: 50%;
  background: #f4f4f4;
}

.proto svg { display: block; width: 30px; height: 30px; }

/* expanded pool */
.details {
  height: 549.4px;
  padding: 28.4px 32px 0;
  background: #f9fafc;
  border-bottom: 2px solid #e0e0e0;
}

.subtable {
  height: 490px;
  border: 2px solid #e0e0e0;
  border-radius: 24px;
  background: #fff;
}

.subrow {
  display: flex;
  align-items: center;
  height: 138px;
  padding: 0 32px;
  border-bottom: 2px solid #e0e0e0;
}

.subrow.head { height: 114px; }

.asset { flex: 1; display: flex; align-items: center; }
.price { width: 300px; text-align: right; }
.amount { width: 320px; text-align: right; }
.value { width: 384px; text-align: right; }

.coin {
  position: relative;
  width: 96px;
  height: 84px;
  padding: 17px 0 0 15px;
}

.coin-main { display: block; width: 50px; height: 51px; }

.chain {
  position: absolute;
  left: -3px;
  top: -1px;
  display: flex;
  align-items: center;
  justify-content: center;
  width: 34px;
  height: 34px;
  border: 2px solid #c8c8c8;
  border-radius: 50%;
  background: #fff;
}

.chain svg { width: 17px; height: 25px; }

.labels { display: flex; flex-direction: column; }
.labels b { font-weight: 500; }
.labels small { font-size: 24px; color: #757575; }

.pager {
  display: flex;
  align-items: center;
  height: 96px;
  padding-right: 8px;
  font-size: 24px;
}

.muted { color: #666; }
.per-page { width: 196px; margin-left: 856px; }
.count { width: 65px; }
.items { width: 113px; margin-left: 72px; }
.range { width: 59px; }
.total { margin-left: 39px; }

.caret {
  border: 8px solid transparent;
  border-top-color: #999;
  border-bottom: 0;
}

.pages { display: flex; gap: 16px; margin-left: auto; }
.pages .icon { fill: #999; }

.to-top {
  position: absolute;
  right: 32px;
  bottom: 32px;
  display: flex;
  align-items: center;
  justify-content: center;
  width: 96px;
  height: 96px;
  border-radius: 50%;
  background: #4e5ba6;
  box-shadow: 0 6px 10px -2px rgba(0,0,0,.2), 0 12px 20px rgba(0,0,0,.14), 0 2px 36px rgba(0,0,0,.12);
}

.to-top .icon { fill: #fff; }
```
